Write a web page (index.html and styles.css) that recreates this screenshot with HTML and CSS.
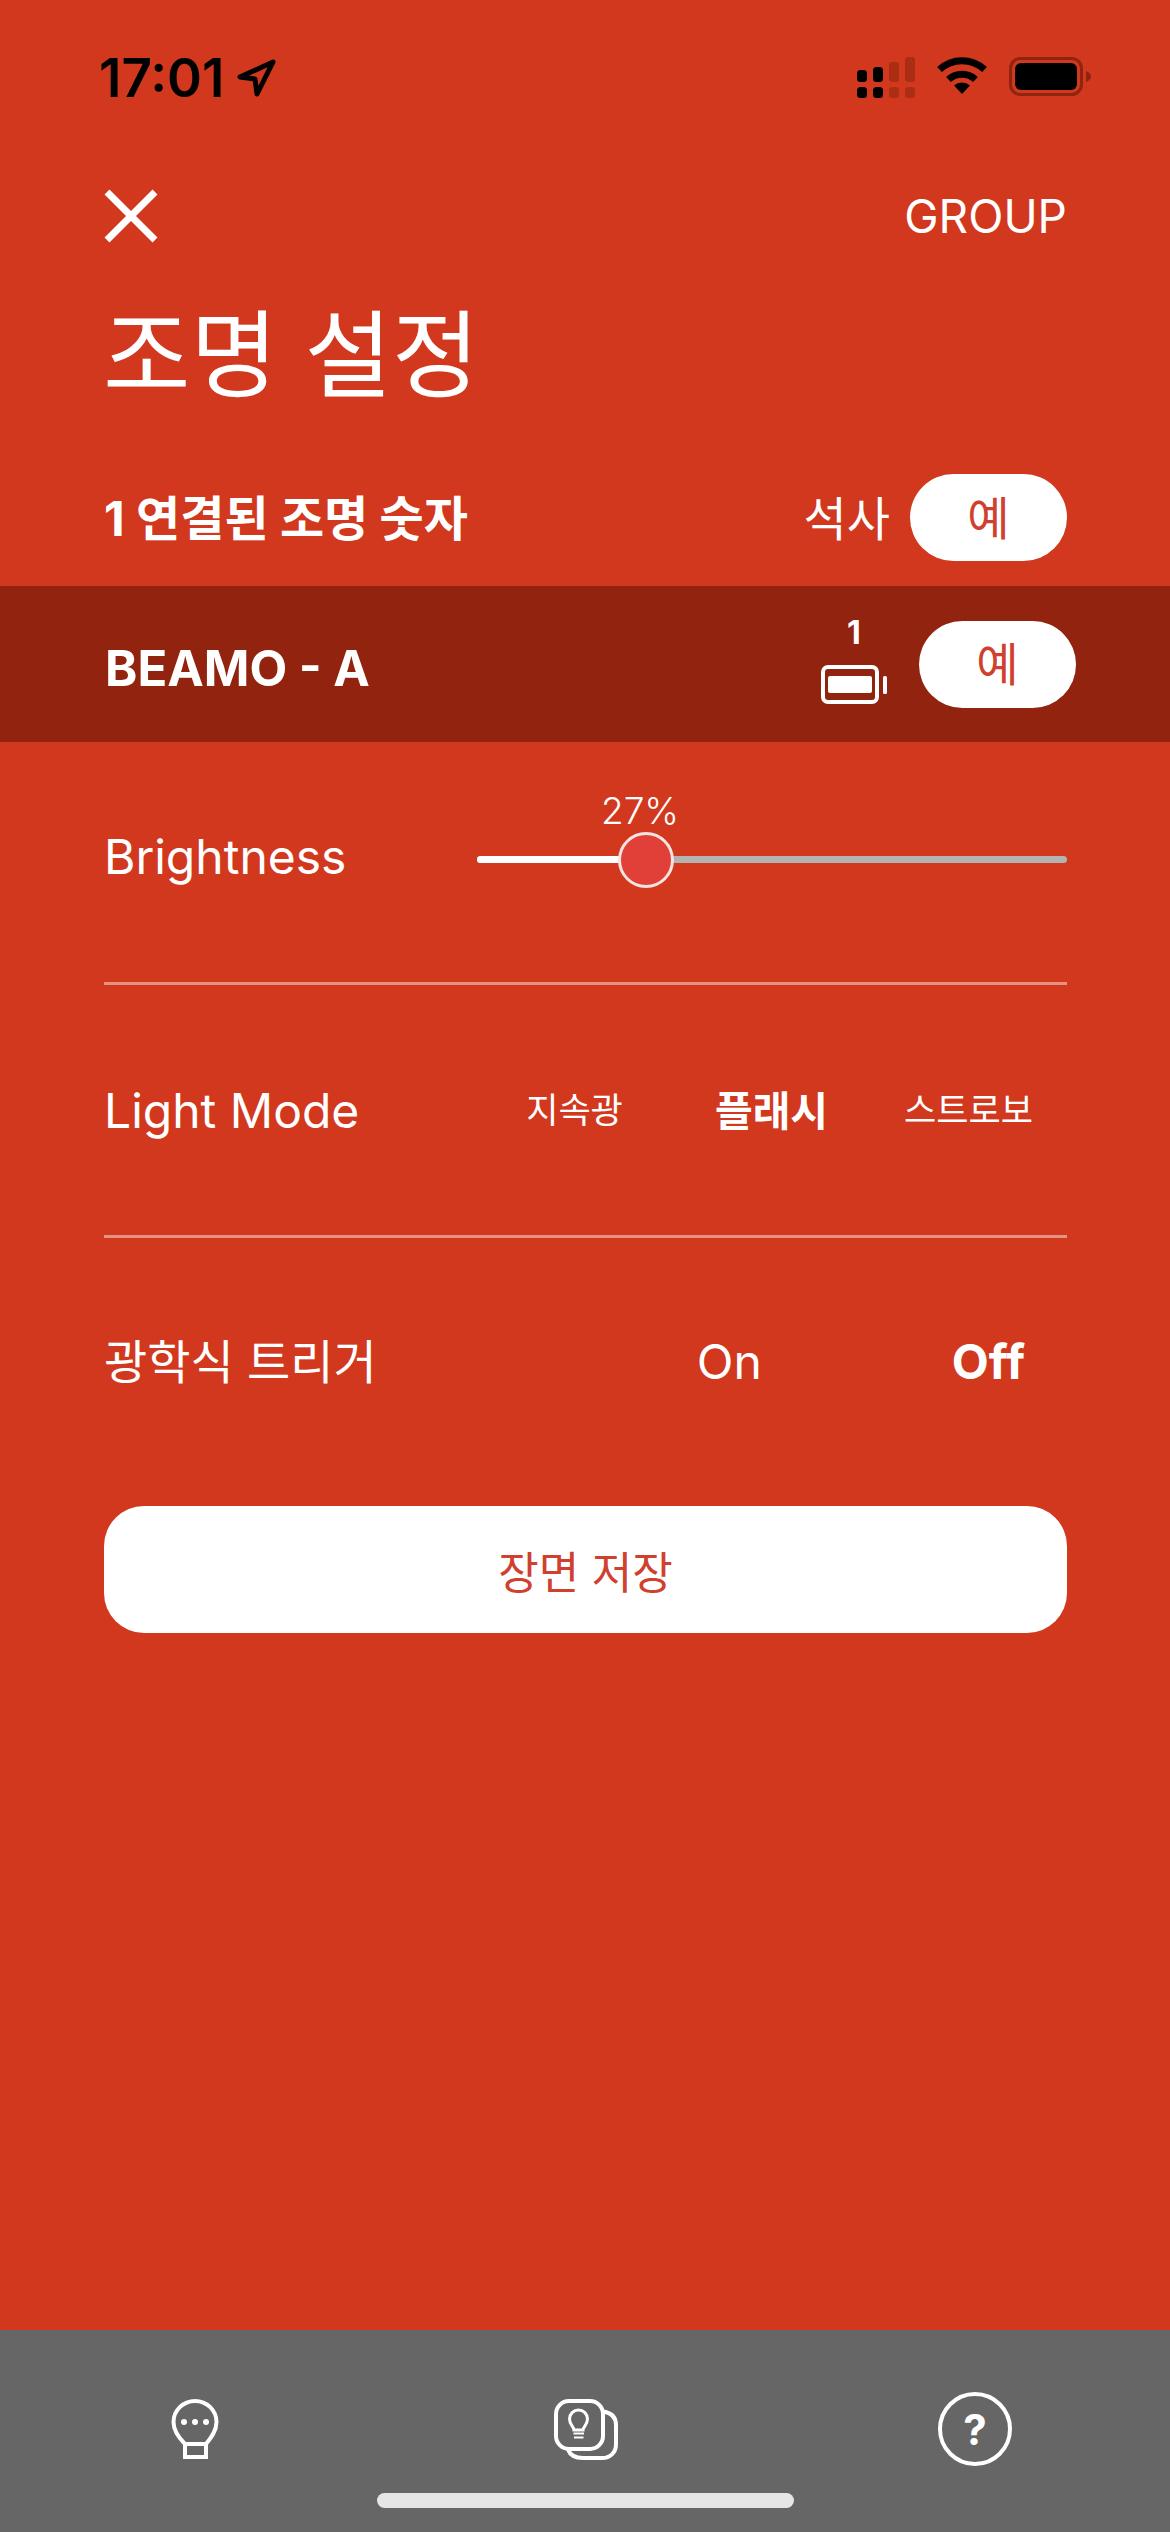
FILE: index.html
```html
<!DOCTYPE html>
<html lang="ko">
<head>
    <meta charset="UTF-8">
    <meta name="viewport" content="width=device-width, initial-scale=1.0">
    <title>조명 설정</title>
    <link rel="stylesheet" href="styles.css">
</head>
<body>
    <div class="status-bar">
        <div class="status-time">
            <span>17:01</span>
            <svg class="icon-location" width="39" height="38" viewBox="0 0 39 38">
                <path d="M36 3 L3 18 L18 20 L20 35 Z" fill="none" stroke="#000" stroke-width="5" stroke-linejoin="round"/>
            </svg>
        </div>
        <div class="status-icons">
            <svg width="58" height="41" viewBox="0 0 58 41">
                <rect x="0" y="13" width="10" height="12" rx="3.5"/>
                <rect x="16" y="10" width="10" height="15" rx="3.5"/>
                <rect x="32" y="5" width="10" height="20" rx="3" fill="#ab2d14"/>
                <rect x="48" y="0" width="10" height="25" rx="3" fill="#ab2d14"/>
                <rect x="0" y="30" width="10" height="11" rx="3.5"/>
                <rect x="16" y="30" width="10" height="11" rx="3.5"/>
                <rect x="32" y="30" width="10" height="11" rx="3.5" fill="#ab2d14"/>
                <rect x="48" y="30" width="10" height="11" rx="3.5" fill="#ab2d14"/>
            </svg>
            <svg width="50" height="37" viewBox="0 0 50 37">
                <path d="M2.5 12.5 A33 33 0 0 1 47.5 12.5" fill="none" stroke="#000" stroke-width="7"/>
                <path d="M11.5 22.5 A20 20 0 0 1 38.5 22.5" fill="none" stroke="#000" stroke-width="7"/>
                <path d="M17 28.5 A12 12 0 0 1 33 28.5 L25 37 Z"/>
            </svg>
            <svg width="82" height="39" viewBox="0 0 82 39">
                <rect x="1.5" y="1.5" width="71" height="36" rx="10" fill="none" stroke="#8f2410" stroke-width="3"/>
                <rect x="6" y="6" width="62" height="27" rx="6"/>
                <path d="M77 14 C80 15 82 17 82 19.5 C82 22 80 24 77 25 Z" fill="#8f2410"/>
            </svg>
        </div>
    </div>

    <header class="nav-row">
        <svg width="54" height="54" viewBox="0 0 54 54">
            <path d="M3 3 L51 51 M51 3 L3 51" stroke="#fff" stroke-width="7" fill="none"/>
        </svg>
        <span class="nav-group">GROUP</span>
    </header>

    <h1 class="page-title">조명 설정</h1>

    <div class="connected-row">
        <span class="connected-count">1 연결된 조명 숫자</span>
        <div class="connected-right">
            <span class="connected-name">석사</span>
            <button class="pill">예</button>
        </div>
    </div>

    <div class="device-band">
        <span class="device-name">BEAMO - A</span>
        <div class="device-battery">
            <span class="battery-num">1</span>
            <svg width="66" height="39" viewBox="0 0 66 39">
                <rect x="2" y="2" width="54" height="35" rx="5" fill="none" stroke="#fff" stroke-width="4"/>
                <rect x="7" y="11" width="44" height="17" rx="2" fill="#fff"/>
                <rect x="62" y="11" width="4" height="18" rx="1.5" fill="#fff"/>
            </svg>
        </div>
        <button class="pill">예</button>
    </div>

    <section class="settings">
        <div class="setting-row row-brightness">
            <span class="setting-label">Brightness</span>
            <div class="slider">
                <div class="slider-track">
                    <div class="slider-fill" style="width: 27%"></div>
                </div>
                <div class="slider-thumb" style="left: 23.9%">
                    <span class="slider-value">27%</span>
                </div>
            </div>
        </div>
        <div class="setting-row row-mode">
            <span class="setting-label">Light Mode</span>
            <div class="mode-options">
                <span class="mode-option">지속광</span>
                <span class="mode-option selected">플래시</span>
                <span class="mode-option">스트로보</span>
            </div>
        </div>
        <div class="setting-row row-trigger">
            <span class="setting-label">광학식 트리거</span>
            <div class="trigger-options">
                <span>On</span>
                <span class="selected">Off</span>
            </div>
        </div>
        <button class="save-button">장면 저장</button>
    </section>

    <nav class="tab-bar">
        <div class="tab-item">
            <svg width="48" height="60" viewBox="0 0 48 60" fill="none" stroke="#fff" stroke-width="4">
                <path d="M14 45 C8 39 2.5 32 2.5 23 A21.5 21 0 0 1 45.5 23 C45.5 32 40 39 35 45 V58 H14 Z"/>
                <path d="M14 45 H35"/>
                <circle cx="13" cy="23" r="3" fill="#fff" stroke="none"/>
                <circle cx="24" cy="23" r="3" fill="#fff" stroke="none"/>
                <circle cx="35" cy="23" r="3" fill="#fff" stroke="none"/>
            </svg>
        </div>
        <div class="tab-item tab-stack">
            <svg width="64" height="61" viewBox="0 0 64 61" fill="none" stroke="#fff" stroke-width="4">
                <rect x="2" y="2" width="47" height="48" rx="13"/>
                <path d="M49.5 12.5 C58 14 62 19 62 26 V45 C62 54 56 59 48 59 H29 C21 59 16 56 14 50.5"/>
                <path d="M20 31 C20 28 15.5 26 15.5 20 A9 9 0 0 1 33.5 20 C33.5 26 29 28 29 31 Z" stroke-width="3"/>
                <path d="M19.5 34.5 H30 M20 38.5 H29.5" stroke-width="2"/>
            </svg>
        </div>
        <div class="tab-item">
            <div class="help-icon">?</div>
        </div>
        <div class="home-indicator"></div>
    </nav>
</body>
</html>
```

FILE: styles.css
```css
* {
    box-sizing: border-box;
}
html, body {
    margin: 0;
    padding: 0;
}
body {
    width: 1170px;
    height: 2532px;
    display: flex;
    flex-direction: column;
    overflow: hidden;
    background-color: #d2381d;
    color: #fff;
    font-family: Inter, "Noto Sans CJK KR", sans-serif;
}
svg {
    display: block;
}

/* status bar */
.status-bar {
    height: 150px;
    flex: none;
    display: flex;
    justify-content: space-between;
    padding: 57px 79px 0 99px;
    color: #000;
}
.status-time {
    display: flex;
    align-items: flex-start;
    gap: 13px;
    font-size: 53px;
    font-weight: 600;
    line-height: 42px;
}
.icon-location {
    margin-top: 2px;
}
.status-icons {
    display: flex;
    align-items: flex-start;
    gap: 22px;
}

/* header */
.nav-row {
    height: 132px;
    flex: none;
    display: flex;
    align-items: center;
    justify-content: space-between;
    padding: 0 103px 0 104px;
}
.nav-group {
    font-size: 46px;
}
.page-title {
    height: 136px;
    flex: none;
    margin: 0;
    padding: 6px 0 0 103px;
    font-size: 95px;
    font-weight: 400;
    line-height: 136px;
}
.connected-row {
    height: 87px;
    flex: none;
    margin: 56px 0 25px;
    display: flex;
    align-items: center;
    justify-content: space-between;
    padding: 0 103px 0 104px;
}
.connected-count {
    margin-bottom: 6px;
    font-size: 48px;
    font-weight: 700;
}
.connected-right {
    display: flex;
    align-items: center;
    gap: 20px;
}
.connected-name {
    margin-bottom: 4px;
    font-size: 47px;
}
.pill {
    width: 157px;
    height: 87px;
    flex: none;
    border: none;
    border-radius: 44px;
    padding: 0 0 6px;
    background-color: #fff;
    color: #d0402f;
    font-family: inherit;
    font-size: 46px;
}

/* device row */
.device-band {
    height: 156px;
    flex: none;
    display: flex;
    align-items: center;
    padding: 0 94px 0 105px;
    background-color: #92240f;
}
.device-name {
    flex: 1;
    margin-top: 8px;
    font-size: 49px;
    font-weight: 700;
}
.device-battery {
    display: flex;
    flex-direction: column;
    align-items: center;
    gap: 15px;
    margin: 0 32px 8px 0;
}
.battery-num {
    font-size: 32px;
    font-weight: 700;
    line-height: 34px;
}

/* settings */
.settings {
    flex: 1;
    padding: 0 103px 0 104px;
}
.setting-row {
    display: flex;
    align-items: center;
    justify-content: space-between;
}
.row-brightness {
    height: 243px;
    padding-bottom: 11px;
    border-bottom: 3px solid rgba(255, 255, 255, 0.45);
}
.row-mode {
    height: 253px;
    border-bottom: 3px solid rgba(255, 255, 255, 0.45);
}
.row-trigger {
    height: 246px;
}
.setting-label {
    font-size: 48px;
}
.row-trigger .setting-label {
    margin-bottom: 5px;
    font-size: 47px;
}
.slider {
    position: relative;
    width: 590px;
    height: 56px;
    margin-top: 6px;
    display: flex;
    align-items: center;
}
.slider-track {
    width: 100%;
    height: 7px;
    border-radius: 4px;
    background-color: #b3b3b3;
    overflow: hidden;
}
.slider-fill {
    height: 100%;
    background-color: #fff;
}
.slider-thumb {
    position: absolute;
    top: 0;
    width: 56px;
    height: 56px;
    border: 3px solid #f6e4e0;
    border-radius: 50%;
    background-color: #e04038;
}
.slider-value {
    position: absolute;
    left: 50%;
    top: -46px;
    transform: translateX(-50%);
    margin-left: -6px;
    font-size: 37px;
    line-height: 44px;
    font-weight: 300;
}
.mode-options {
    width: 591px;
    margin-bottom: 5px;
    display: grid;
    grid-template-columns: repeat(3, 1fr);
    align-items: center;
    text-align: center;
    font-size: 35px;
}
.mode-option.selected {
    font-size: 41px;
    font-weight: 700;
}
.trigger-options {
    display: flex;
    gap: 190px;
    padding-right: 42px;
    font-size: 48px;
}
.trigger-options .selected {
    font-weight: 700;
}
.save-button {
    display: block;
    width: 100%;
    height: 127px;
    margin-top: 22px;
    border: none;
    border-radius: 40px;
    background-color: #fff;
    color: #d0402f;
    font-family: inherit;
    font-size: 44px;
}

/* bottom tabs */
.tab-bar {
    position: relative;
    height: 202px;
    flex: none;
    display: grid;
    grid-template-columns: repeat(3, 1fr);
    align-items: center;
    padding-bottom: 4px;
    background-color: #666666;
}
.tab-item {
    display: flex;
    justify-content: center;
}
.tab-stack {
    padding-left: 2px;
}
.help-icon {
    width: 74px;
    height: 74px;
    display: flex;
    align-items: center;
    justify-content: center;
    border: 4px solid #fff;
    border-radius: 50%;
    font-size: 42px;
    font-weight: 700;
}
.home-indicator {
    position: absolute;
    left: 377px;
    bottom: 24px;
    width: 417px;
    height: 15px;
    border-radius: 8px;
    background-color: #e6e6e6;
}
```
